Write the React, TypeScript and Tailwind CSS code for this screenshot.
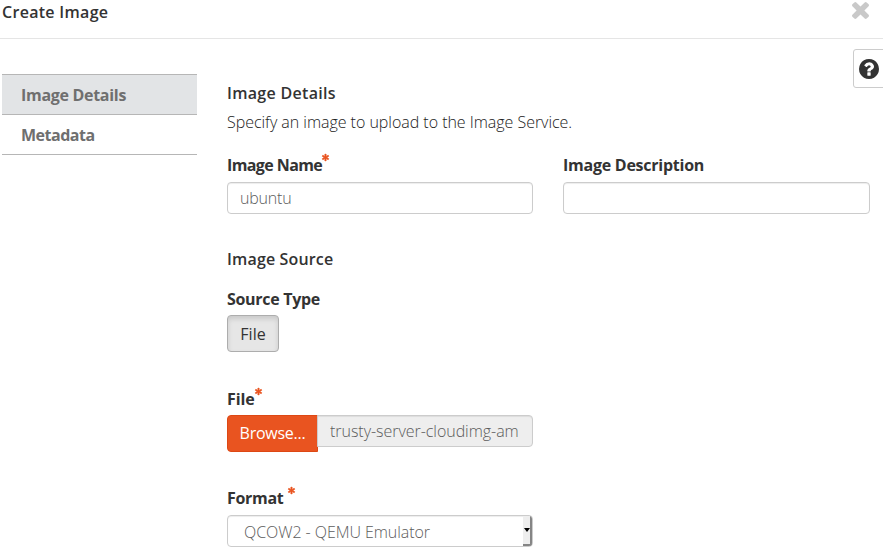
import type { ReactNode } from 'react';
import { FaAsterisk } from 'react-icons/fa';

function CloseIcon() {
  return (
    <svg viewBox="110 366 1188 1188" className="h-[17px] w-[17px]" fill="#c9c9c9">
      <path d="M1298 1322q0 40-28 68l-136 136q-28 28-68 28t-68-28l-294-294-294 294q-28 28-68 28t-68-28l-136-136q-28-28-28-68t28-68l294-294-294-294q-28-28-28-68t28-68l136-136q28-28 68-28t68 28l294 294 294-294q28-28 68-28t68 28l136 136q28 28 28 68t-28 68l-294 294 294 294q28 28 28 68z" />
    </svg>
  );
}

function HelpIcon() {
  return (
    <svg viewBox="128 128 1536 1536" className="h-5 w-5" fill="#333">
      <path d="M1024 1376v-192q0-14-9-23t-23-9h-192q-14 0-23 9t-9 23v192q0 14 9 23t23 9h192q14 0 23-9t9-23zm256-672q0-88-55.500-163t-138.500-116-170-41q-243 0-371 213-15 24 8 42l132 100q7 6 19 6 16 0 25-12 53-68 86-92 34-24 86-24 48 0 85.500 26t37.500 59q0 38-20 61t-68 45q-63 28-115.500 86.500t-52.500 125.500v36q0 14 9 23t23 9h192q14 0 23-9t9-23q0-19 21.500-49.500t54.500-49.500q32-18 49-28.500t46-35 44.500-48 28-60.500 12.500-81zm384 192q0 209-103 385.500t-279.500 279.500-385.500 103-385.500-103-279.500-279.500-103-385.500 103-385.500 279.500-279.500 385.500-103 385.500 103 279.500 279.500 103 385.500z" />
    </svg>
  );
}

function Label({ children, required, spaced, tracking }: { children: ReactNode; required?: boolean; spaced?: boolean; tracking: string }) {
  return (
    <div className="flex h-[22px] items-start font-bold">
      <span className={tracking}>{children}</span>
      {required && (
        <FaAsterisk
          stroke="#e95420"
          strokeWidth={55}
          className={`h-[7px] w-[7px] overflow-visible text-[#e95420] ${spaced ? 'ml-[5px]' : ''}`}
        />
      )}
    </div>
  );
}

const field = 'h-8 w-full rounded-[4px] border border-[#ccc] bg-white px-3 font-light text-[#5c5c5c] shadow-[inset_0_1px_1px_rgba(0,0,0,0.075)]';

export default function App() {
  return (
    <div className="relative h-[554px] w-[883px] overflow-hidden bg-white font-['Open_Sans','Noto_Sans',sans-serif] text-[16px] leading-[22px] text-[#333]">
      <header className="flex h-[39px] items-start justify-between border-b border-[#e5e5e5] pr-[14px] pl-[2px]">
        <h1 className="mt-px font-semibold tracking-[0.3px]">Create Image</h1>
        <button aria-label="Close" className="mt-[2px]"><CloseIcon /></button>
      </header>
      <div className="flex items-start pl-[2px]">
        <nav className="mt-[35px] w-[195px] shrink-0 border-t border-[#b6b6b6] font-bold text-[#6f6f6f]">
          <div className="h-10 border-b border-[#b6b6b6] bg-[#e2e4e6] pt-[9px] pl-[19px] tracking-[-0.3px]">Image Details</div>
          <div className="h-10 border-b border-[#b6b6b6] pt-[9px] pl-[19px] tracking-[-0.5px]">Metadata</div>
        </nav>
        <main className="mt-[43px] ml-[30px] w-[643px] shrink-0">
          <h2 className="font-semibold tracking-[0.3px]">Image Details</h2>
          <p className="mt-[7px] font-light tracking-[-0.03px] whitespace-nowrap text-[#222]">Specify an image to upload to the Image Service.</p>
          <div className="mt-[21px] flex gap-[30px]">
            <div className="w-[306px]">
              <Label required tracking="tracking-[-0.6px]">Image Name</Label>
              <input aria-label="Image Name" className={`mt-[6px] block tracking-[-0.2px] ${field}`} defaultValue="ubuntu" />
            </div>
            <div className="w-[307px] shrink-0">
              <Label tracking="tracking-[-0.25px]">Image Description</Label>
              <input aria-label="Image Description" className={`mt-[6px] block ${field}`} />
            </div>
          </div>
          <section className="mt-[34px] w-[306px]">
            <h2 className="font-semibold tracking-[0.15px]">Image Source</h2>
            <div className="mt-[18px]"><Label tracking="tracking-[-0.3px]">Source Type</Label></div>
            <button className="mt-[5px] block h-[37px] w-[52px] rounded-[4px] border border-[#adadad] bg-[#e6e6e6] pt-px shadow-[inset_0_3px_5px_rgba(0,0,0,0.125)]">File</button>
            <div className="mt-[36px]"><Label required tracking="tracking-[-0.1px]">File</Label></div>
            <div className="mt-[5px] flex h-[37px] items-start">
              <button className="h-[37px] w-[91px] shrink-0 rounded-l-[4px] border border-[#dd4814] bg-[#e95420] pb-px tracking-[-0.25px] text-white">Browse...</button>
              <div className="-ml-px h-8 w-[216px] rounded-r-[4px] border border-[#ccc] bg-[#eee] px-3 font-light text-[#5c5c5c] shadow-[inset_0_1px_1px_rgba(0,0,0,0.075)]">
                <div className="overflow-hidden leading-[31px] tracking-[-0.04px] whitespace-nowrap">trusty-server-cloudimg-am</div>
              </div>
            </div>
            <div className="mt-[35px]"><Label required spaced tracking="tracking-[-0.3px]">Format</Label></div>
            <div className={`mt-[6px] flex justify-between overflow-hidden !pr-0 !pl-4 ${field}`}>
              <span className="leading-[33px] tracking-[-0.06px]">QCOW2 - QEMU Emulator</span>
              <span className="flex w-[9px] items-center justify-end border-r-2 border-b-2 border-[#858585] bg-[#eee]">
                <svg viewBox="0 0 6 4" className="h-[4px] w-[6px]"><path d="M0 0H6L3 4Z" fill="#000" /></svg>
              </span>
            </div>
          </section>
        </main>
      </div>
      <button aria-label="Help" className="absolute top-[49px] left-[853px] flex h-[39px] w-[40px] items-center rounded-[3px] border border-[#ccc] bg-white pl-[5px]">
        <HelpIcon />
      </button>
    </div>
  );
}
